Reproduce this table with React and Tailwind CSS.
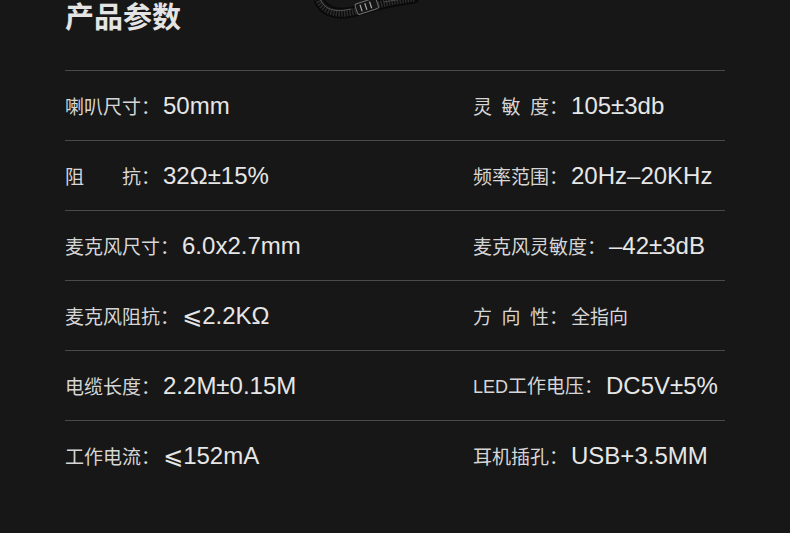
import React from "react";

const cjk = { fontFamily: '"Noto Sans CJK SC", "Noto Sans", sans-serif' };
const lat = { fontFamily: '"Liberation Sans", "DejaVu Sans", Arial, sans-serif' };

function Spaced({ chars }) {
  return (
    <>
      {chars.map((c, i) => (
        <span key={i} className={i < chars.length - 1 ? "inline-block mr-[9.5px]" : "inline-block"}>
          {c}
        </span>
      ))}
    </>
  );
}

function Cell({ label, value }) {
  return (
    <div className="h-[70px] border-t border-[#4a4a4a] flex items-center">
      <span className="text-[19px] text-[#d6d6d6] leading-none whitespace-nowrap" style={cjk}>
        {label}
      </span>
      <span className="ml-[3px] text-[24px] text-[#e6e6e6] leading-none whitespace-nowrap" style={lat}>
        {value}
      </span>
    </div>
  );
}

export default function App() {
  const rows = [
    [<>喇叭尺寸：</>, "50mm", <><Spaced chars={["灵", "敏", "度："]} /></>, "105±3db"],
    [<>阻　　抗：</>, "32Ω±15%", <>频率范围：</>, "20Hz–20KHz"],
    [<>麦克风尺寸：</>, "6.0x2.7mm", <>麦克风灵敏度：</>, "–42±3dB"],
    [<>麦克风阻抗：</>, "⩽2.2KΩ", <><Spaced chars={["方", "向", "性："]} /></>, <span style={cjk} className="text-[19px] text-[#d6d6d6]">全指向</span>],
    [<>电缆长度：</>, "2.2M±0.15M", <><span style={lat} className="text-[18px]">LED</span>工作电压：</>, "DC5V±5%"],
    [<>工作电流：</>, "⩽152mA", <>耳机插孔：</>, "USB+3.5MM"],
  ];
  const cable = "M4 -2 C 8 10, 20 16, 38 12 L 60 6 C 74 2, 88 0, 100 -2";
  return (
    <div className="w-[790px] h-[533px] overflow-hidden bg-[#171717] px-[65px]">
      <div className="h-[70px] flex items-start">
        <h1 className="text-[29px] font-bold leading-[32px] text-[#e4e4e4] -mt-[1px]" style={cjk}>
          产品参数
        </h1>
        <svg width="110" height="24" viewBox="0 0 110 24" className="ml-[133px]">
          <path d={cable} fill="none" stroke="#0a0a0a" strokeWidth="11" strokeLinecap="round" />
          <path d={cable} fill="none" stroke="#2c2c2c" strokeWidth="7" strokeDasharray="1.5 1.2" />
          <path d="M6 -1 C 10 9, 20 13, 37 9" fill="none" stroke="#555" strokeWidth="1" />
          <g transform="rotate(-18 52 7)">
            <rect x="42" y="1" width="22" height="11" rx="2" fill="#151515" stroke="#707070" strokeWidth="1" />
            <path d="M47 3 v7 M52 3 v7 M57 3 v7" stroke="#a8a8a8" strokeWidth="1.2" />
          </g>
          <path d="M70 2 C 80 0, 90 -1, 100 -2" fill="none" stroke="#4a4a4a" strokeWidth="1" />
        </svg>
      </div>
      <div className="grid grid-cols-[408px_252px]">
        {rows.map((r, i) => (
          <React.Fragment key={i}>
            <Cell label={r[0]} value={r[1]} />
            <Cell label={r[2]} value={r[3]} />
          </React.Fragment>
        ))}
      </div>
    </div>
  );
}
